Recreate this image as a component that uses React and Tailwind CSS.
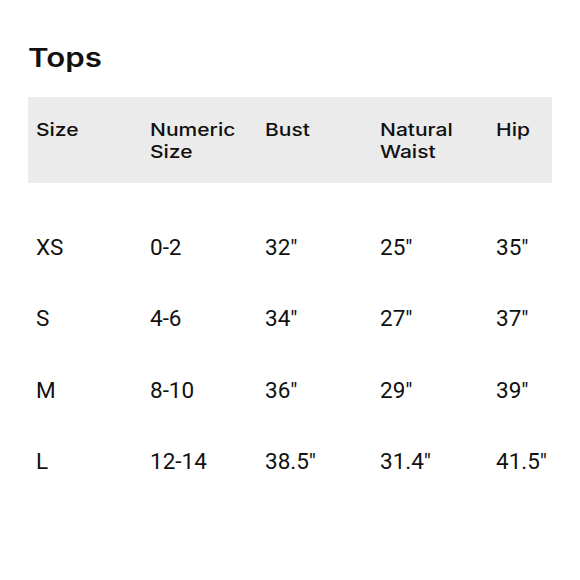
const HEAD = [['Size'], ['Numeric', 'Size'], ['Bust'], ['Natural', 'Waist'], ['Hip']]

const ROWS = [
  ['XS', '0-2', '32"', '25"', '35"'],
  ['S', '4-6', '34"', '27"', '37"'],
  ['M', '8-10', '36"', '29"', '39"'],
  ['L', '12-14', '38.5"', '31.4"', '41.5"'],
]

const cols = 'grid grid-cols-[114px_115px_115px_116px_64px]'

export default function App() {
  return (
    <div className="h-[580px] w-[580px] overflow-hidden bg-white text-[#111]">
      <div className="px-[28px] pt-[43px]">
        <h1 className="origin-left scale-x-[1.2] font-['Inter',sans-serif] text-[26px] font-semibold leading-[30px]">Tops</h1>

        <div className={`${cols} mt-[24px] h-[86px] bg-[#ebebeb] pt-[22px] font-['Inter',sans-serif] text-[17.5px] font-medium leading-[22px]`}>
          {HEAD.map((lines, i) => (
            <div key={i} className="pl-[8px]">
              {lines.map((l) => (
                <div key={l} className="origin-left scale-x-[1.2]">{l}</div>
              ))}
            </div>
          ))}
        </div>

        <div className="pt-[29px] font-['Roboto',sans-serif] text-[22.5px]">
          {ROWS.map((r) => (
            <div key={r[0]} className={`${cols} h-[71.5px] items-center`}>
              {r.map((c, i) => (
                <div key={i} className="pl-[8px]">{c}</div>
              ))}
            </div>
          ))}
        </div>
      </div>
    </div>
  )
}
